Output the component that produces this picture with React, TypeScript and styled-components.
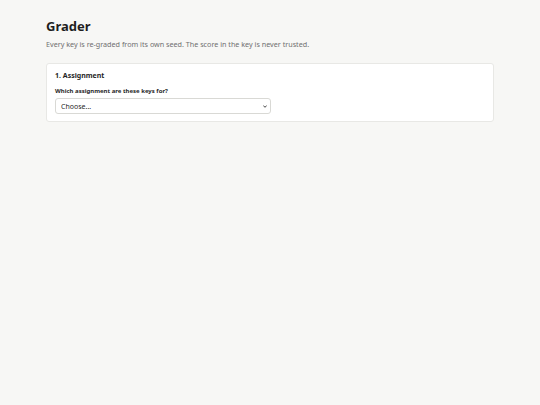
import React from 'react';
import styled, { createGlobalStyle } from 'styled-components';

const GlobalStyle = createGlobalStyle`
  html, body {
    margin: 0;
    padding: 0;
    background: #f7f7f5;
  }
  body {
    font-family: "Noto Sans", "Open Sans", sans-serif;
    color: #1f1f1f;
  }
`;

const Page = styled.main`
  max-width: 448px;
  margin: 0 auto;
  padding: 17px 0;
`;

const Title = styled.h1`
  margin: 0;
  font-size: 13px;
  font-weight: 700;
  line-height: 18px;
`;

const Subtitle = styled.p`
  margin: 4px 0 14px;
  font-size: 7.2px;
  line-height: 10px;
  color: #707070;
`;

const Card = styled.section`
  background: #fff;
  border: 1px solid #e8e8e5;
  border-radius: 3px;
  padding: 6px 8px 7px;
`;

const CardTitle = styled.h2`
  margin: 0 0 6px;
  font-size: 7px;
  font-weight: 700;
  line-height: 11px;
`;

const Label = styled.label`
  display: block;
  margin-bottom: 2px;
  font-size: 6px;
  font-weight: 700;
  line-height: 9px;
`;

const SelectWrap = styled.div`
  position: relative;
  width: 216px;
`;

const Select = styled.select`
  display: block;
  width: 100%;
  height: 16px;
  padding: 0 12px 0 5px;
  font-family: inherit;
  font-size: 7px;
  color: #1f1f1f;
  background: #fff;
  border: 1px solid #d9d9d5;
  border-radius: 3px;
  appearance: none;
  -webkit-appearance: none;
`;

const Chevron = styled.svg`
  position: absolute;
  right: 4px;
  top: 7px;
  width: 4px;
  height: 3px;
  pointer-events: none;
`;

export default function App() {
  return (
    <>
      <GlobalStyle />
      <Page>
        <Title>Grader</Title>
        <Subtitle>Every key is re-graded from its own seed. The score in the key is never trusted.</Subtitle>
        <Card>
          <CardTitle>1. Assignment</CardTitle>
          <Label htmlFor="assignment">Which assignment are these keys for?</Label>
          <SelectWrap>
            <Select id="assignment" defaultValue="">
              <option value="">Choose...</option>
            </Select>
            <Chevron viewBox="0 0 4 3">
              <path d="M0.3 0.5 L2 2.3 L3.7 0.5" fill="none" stroke="#333" strokeWidth="0.9" />
            </Chevron>
          </SelectWrap>
        </Card>
      </Page>
    </>
  );
}
